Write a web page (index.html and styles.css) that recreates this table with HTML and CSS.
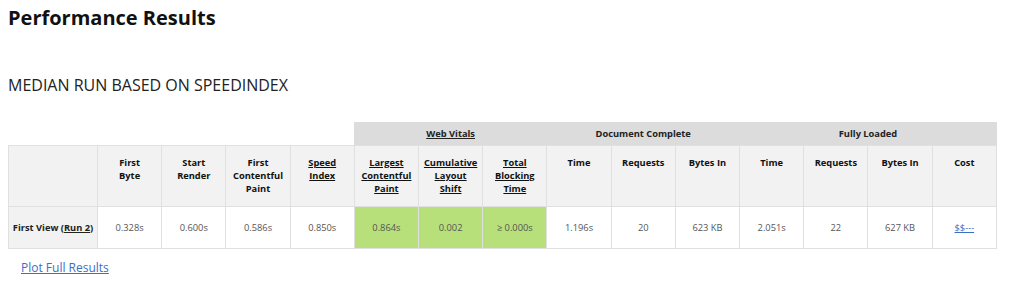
FILE: index.html
```html
<!DOCTYPE html>
<html>
<head>
<meta charset="utf-8">
<link rel="stylesheet" href="styles.css">
</head>
<body>
<h1 class="title">Performance Results</h1>
<h2 class="subtitle">MEDIAN RUN BASED ON SPEEDINDEX</h2>
<table class="results">
  <colgroup>
    <col class="c-label">
    <col span="14">
  </colgroup>
  <thead>
    <tr class="groups">
      <th class="blank" colspan="5"></th>
      <th class="group" colspan="3"><a class="ulink" href="#">Web Vitals</a></th>
      <th class="group" colspan="3">Document Complete</th>
      <th class="group" colspan="4">Fully Loaded</th>
    </tr>
    <tr class="labels">
      <th></th>
      <th>First<br>Byte</th>
      <th>Start<br>Render</th>
      <th>First<br>Contentful<br>Paint</th>
      <th><a class="ulink" href="#">Speed<br>Index</a></th>
      <th><a class="ulink" href="#">Largest<br>Contentful<br>Paint</a></th>
      <th><a class="ulink" href="#">Cumulative<br>Layout<br>Shift</a></th>
      <th><a class="ulink" href="#">Total<br>Blocking<br>Time</a></th>
      <th>Time</th>
      <th>Requests</th>
      <th>Bytes In</th>
      <th>Time</th>
      <th>Requests</th>
      <th>Bytes In</th>
      <th>Cost</th>
    </tr>
  </thead>
  <tbody>
    <tr class="data">
      <th class="rowlabel">First View (<a class="ulink" href="#">Run 2</a>)</th>
      <td>0.328s</td>
      <td>0.600s</td>
      <td>0.586s</td>
      <td>0.850s</td>
      <td class="good">0.864s</td>
      <td class="good">0.002</td>
      <td class="good">&ge; 0.000s</td>
      <td>1.196s</td>
      <td>20</td>
      <td>623 KB</td>
      <td>2.051s</td>
      <td>22</td>
      <td>627 KB</td>
      <td><a class="cost" href="#">$$---</a></td>
    </tr>
  </tbody>
</table>
<a class="plot" href="#">Plot Full Results</a>
</body>
</html>
```
FILE: styles.css
```css
body {
  margin: 4px 8px 0;
  font-family: "Open Sans", "DejaVu Sans", sans-serif;
  color: #222;
  background: #fff;
}
.title {
  margin: 0;
  font-size: 20px;
  line-height: 27px;
  font-weight: 700;
  color: #111;
}
.subtitle {
  margin: 43px 0 0;
  font-size: 16px;
  line-height: 22px;
  font-weight: 400;
  color: #222;
}
.results {
  margin-top: 26px;
  width: 989px;
  table-layout: fixed;
  border-collapse: collapse;
  font-size: 9.3px;
}
.c-label {
  width: 89px;
}
.results th,
.results td {
  text-align: center;
  border: 1px solid #e0e0e0;
}
.groups th {
  border: none;
  padding: 5px 2px;
  height: 12px;
  vertical-align: middle;
  font-weight: 700;
  color: #222;
}
.groups .blank {
  background: #fff;
}
.groups .group {
  background: #dcdcdc;
}
.labels th {
  background: #f2f2f2;
  vertical-align: top;
  padding: 10px 2px 11px;
  font-weight: 700;
  color: #111;
}
.data td,
.data th {
  padding: 14px 2px;
  vertical-align: middle;
}
.data td {
  background: #fff;
  color: #555;
  font-weight: 400;
}
.data .rowlabel {
  background: #f2f2f2;
  font-weight: 700;
  color: #222;
}
.data td.good {
  background: #b7e07b;
}
.ulink {
  color: inherit;
  text-decoration: underline;
}
.cost {
  color: #3b6fc6;
  text-decoration: underline;
}
.plot {
  display: inline-block;
  margin: 11px 0 0 13px;
  font-size: 12px;
  line-height: 16px;
  color: #3b6fc6;
  text-decoration: underline;
}
```
